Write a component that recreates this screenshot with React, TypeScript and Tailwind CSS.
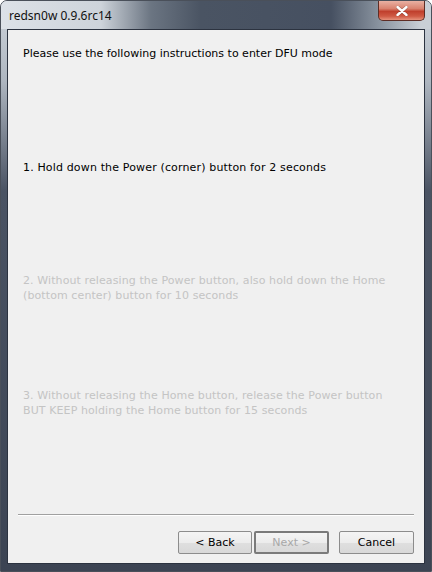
import React from "react";

const font = { fontFamily: '"DejaVu Sans", Verdana, sans-serif' };

function Btn({ children, focus, w }: { children: React.ReactNode; focus?: boolean; w?: string }) {
  return (
    <div
      className={
        (w ?? "w-[75px]") +
        " h-[23px] flex items-center justify-center text-[11px] leading-none rounded-[2px] " +
        (focus ? "border-2 border-[#7a7a7a] text-[#a8a8a8] " : "border border-[#8c8c8c] text-black ") +
        "bg-[linear-gradient(to_bottom,#f4f4f4_0%,#ececec_50%,#dfdfdf_51%,#d8d8d8_100%)]"
      }
      style={font}
    >
      {children}
    </div>
  );
}

export default function App() {
  return (
    <div className="w-[432px] h-[572px] overflow-hidden bg-white">
      <div className="w-[432px] h-[572px] rounded-t-[7px] border border-[#4a505a] flex flex-col bg-[linear-gradient(to_bottom,#cfd5dc_0px,#aeb6c0_80px,#4a5363_190px,#3c4453_100%)]">
        <div className="h-[28px] flex items-start justify-between rounded-t-[6px] bg-[linear-gradient(to_right,#dde2e8_0px,#cdd3da_100px,#6b7582_150px,#4a5463_200px,#465061_330px,#8c96a2_380px,#c9cfd6_420px)]">
          <div className="pl-[8px] pt-[8px] text-[12px] leading-[14px] text-[#111]" style={{ fontFamily: '"Noto Sans", "Open Sans", sans-serif' }}>
            redsn0w 0.9.6rc14
          </div>
          <div className="mr-[6px] w-[47px] h-[20px] rounded-b-[5px] border border-t-0 border-[#5e2d25] flex items-center justify-center bg-[linear-gradient(to_bottom,#e9b1a3_0%,#d9826f_40%,#c0402d_55%,#cf5a44_80%,#e6927c_100%)]">
            <svg width="12" height="10" viewBox="0 0 12 10">
              <path d="M1.5 1 L10.5 9 M10.5 1 L1.5 9" stroke="#5a2a20" strokeWidth="3.4" strokeLinecap="round" opacity="0.5" />
              <path d="M1.5 1 L10.5 9 M10.5 1 L1.5 9" stroke="#ffffff" strokeWidth="2.4" strokeLinecap="round" />
            </svg>
          </div>
        </div>
        <div className="mx-[6px] h-[535px] border border-[#2c3340] bg-[#f0f0f0] flex flex-col" style={font}>
          <div className="pl-[15px] pt-[16px] text-[11px] leading-[15px] text-black">
            <div className="h-[114px]">Please use the following instructions to enter DFU mode</div>
            <div className="h-[113px] tracking-[0.15px]">1. Hold down the Power (corner) button for 2 seconds</div>
            <div className="h-[115px] text-[#c4c4c4] tracking-[0.1px]">
              2. Without releasing the Power button, also hold down the Home
              <br />
              (bottom center) button for 10 seconds
            </div>
            <div className="text-[#c4c4c4] tracking-[0.1px]">
              3. Without releasing the Home button, release the Power button
              <br />
              BUT KEEP holding the Home button for 15 seconds
            </div>
          </div>
          <div className="mt-auto mx-[10px] border-t border-[#a0a0a0] border-b border-b-white" />
          <div className="flex justify-end gap-[2px] pr-[10px] pt-[15px] pb-[9px]">
            <Btn w="w-[74px]">&lt; Back</Btn>
            <Btn focus>Next &gt;</Btn>
            <div className="w-[6px]" />
            <Btn>Cancel</Btn>
          </div>
        </div>
      </div>
    </div>
  );
}
